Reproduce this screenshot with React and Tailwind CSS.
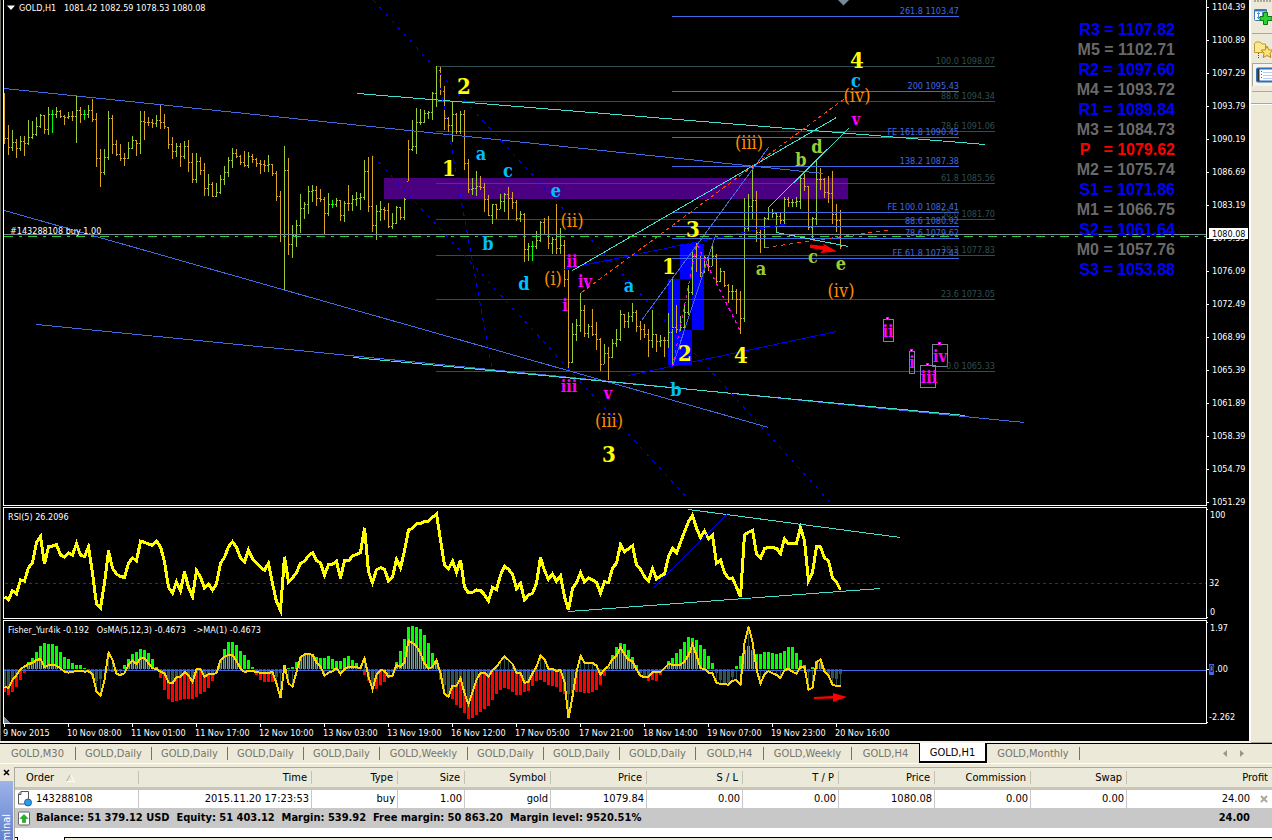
import React from "react";

/* Price bars, one per 4px step: high, low, close (in thirds of a pixel), direction */
const BARS = `279 432 415 o;375 465 442 o;390 453 427 g;418 474 445 o;408 453 424 g;408 468 431 o;360 435 412 g;363 417 403 g;351 408 379 g;342 384 346 g;345 402 388 o;321 405 343 g;330 399 343 l;321 354 333 g;330 354 349 o;345 375 352 o;336 357 348 g;333 363 349 o;285 429 330 g;321 369 343 o;330 360 343 l;315 354 330 g;297 366 357 o;339 501 474 o;447 561 517 o;447 525 471 g;333 480 354 g;345 462 433 o;420 468 463 o;432 483 475 o;459 498 475 o;426 477 445 g;408 447 421 g;420 468 430 o;333 462 364 g;333 420 366 o;351 378 367 o;357 384 370 o;345 381 361 g;312 387 367 o;342 387 380 o;381 447 433 o;411 477 453 o;429 471 439 g;429 501 469 o;423 477 439 g;420 516 487 o;459 549 538 o;459 549 483 g;471 525 511 o;489 588 565 o;522 588 553 g;546 591 589 o;549 591 577 g;525 582 537 g;498 555 516 g;471 531 481 g;444 504 460 g;447 474 470 o;465 495 487 o;453 501 495 o;456 504 469 g;462 489 478 o;474 501 489 o;480 522 493 o;480 516 496 o;465 516 493 g;492 528 520 o;513 603 589 o;573 726 703 o;438 873 511 g;474 765 733 o;675 774 706 g;660 741 676 g;582 699 625 g;606 657 613 g;558 642 574 g;555 606 570 g;558 618 595 o;567 606 598 o;591 702 640 o;579 648 613 g;600 624 613 l;594 621 601 g;600 663 646 o;603 666 610 g;555 633 610 o;585 633 598 g;576 618 595 g;579 630 592 g;480 600 514 g;471 636 619 o;465 696 676 o;615 720 634 g;603 663 628 g;621 660 631 o;609 684 678 o;639 687 670 g;618 672 622 g;621 660 651 o;594 660 598 g;420 543 448 o;360 453 438 g;324 462 367 g;327 375 367 g;330 369 340 g;333 357 337 g;276 360 280 g;198 321 211 g;201 285 274 o;258 390 355 o;351 396 376 o;304 426 343 g;339 402 394 o;333 402 343 g;330 510 490 o;477 579 568 o;534 585 565 g;513 588 559 g;528 570 562 o;549 636 598 o;585 648 645 o;612 672 613 g;612 657 628 o;582 627 604 g;579 636 583 g;561 660 595 o;576 627 607 o;600 663 655 o;633 666 643 g;640 786 748 o;729 783 738 g;723 783 738 l;693 747 721 g;663 726 666 g;654 705 703 o;648 747 730 o;711 762 718 g;612 762 745 o;684 762 736 g;720 861 838 o;810 1113 1088 o;969 1089 1004 g;957 1023 977 g;879 996 932 g;915 1011 1000 o;972 1014 980 g;927 1008 1003 o;966 1050 1018 o;1014 1113 1094 o;1032 1092 1061 g;1041 1140 1072 o;1017 1074 1031 g;987 1041 1018 g;930 1023 943 g;942 984 964 o;936 984 949 g;909 966 936 g;930 996 979 o;963 1020 988 o;972 1014 1002 o;987 1071 1022 o;930 1044 1003 g;1002 1056 1025 o;1005 1041 1021 g;1011 1071 1021 o;939 1044 997 g;831 1101 982 g;915 999 987 o;948 993 982 g;912 990 938 g;855 945 877 g;750 885 770 g;729 816 774 o;768 831 817 o;768 819 772 g;768 813 798 o;738 798 770 g;762 849 845 o;804 846 814 g;813 861 855 o;852 909 874 o;855 900 874 g;867 942 898 o;873 1002 956 o;594 966 686 g;582 696 619 g;496 657 600 g;573 726 697 o;690 759 716 o;651 744 655 g;621 660 636 g;627 654 640 g;639 699 648 g;639 672 661 o;591 672 598 g;591 621 607 o;597 621 607 g;591 621 604 g;525 627 535 g;522 573 559 o;558 690 682 o;651 717 655 g;478 675 538 g;504 570 538 o;534 594 577 o;528 609 580 o;513 672 643 o;612 696 661 o;630 747 739 o`
  .split(";")
  .map((s) => {
    const [h, l, c, d] = s.split(" ");
    return { h: Math.floor(h / 3), l: Math.floor(l / 3), c: Math.floor(c / 3), d };
  });

/* RSI(5), thirds of a pixel below y = 500 */
const RSI = [
  290, 299, 272, 282, 240, 243, 203, 188, 128, 110, 192, 140, 138, 134, 165, 172, 158, 165, 131, 165, 170, 141, 220, 312, 323, 250, 152, 205, 222, 230, 232, 190, 174, 182, 124, 127, 132, 136, 124, 140, 185, 262, 279, 246, 273, 215, 262, 289, 212, 232, 264, 252, 270, 252, 190, 172, 140, 125, 142, 174, 186, 150, 176, 188, 202, 211, 190, 250, 305, 331, 170, 245, 234, 218, 190, 184, 168, 158, 182, 188, 225, 194, 193, 184, 235, 182, 183, 168, 163, 158, 83, 215, 248, 209, 203, 208, 243, 232, 178, 204, 153, 90, 85, 72, 70, 65, 64, 52, 42,
  120, 196, 207, 183, 217, 180, 262, 278, 277, 270, 271, 284, 303, 262, 269, 226, 198, 208, 222, 266, 250, 300, 285, 280, 250, 172, 212, 238, 222, 244, 228, 290, 330, 266, 248, 218, 246, 233, 240, 247, 279, 245, 248, 204, 190, 134, 156, 146, 137, 195, 208, 230, 243, 206, 237, 228, 222, 170, 144, 159, 127, 95, 65, 46, 85, 112, 93, 117, 106, 190, 180, 218, 235, 234, 262, 290, 105, 97, 91, 163, 175, 146, 142, 143, 145, 161, 116, 132, 131, 130, 83, 122, 243, 218, 140, 141, 174, 182, 234, 246, 270,
];

/* Fisher histogram */
const FISHER = [
  576, 585, 577, 561, 540, 519, 487, 474, 456, 438, 429, 432, 432, 438, 456, 471, 477, 489, 495, 495, 504, 510, 530, 543, 537, 514, 511, 516, 516, 514, 495, 477, 462, 456, 447, 450, 459, 477, 501, 534, 570, 597, 606, 603, 600, 597, 597, 597, 591, 582, 576, 564, 543, 516, 480, 447, 426, 426, 435, 453, 465, 480, 501, 525, 540, 546, 546, 546, 531, 519, 512, 504, 501, 487, 474, 465, 465, 468, 471, 474, 474, 468, 477, 483, 483, 474, 468, 480, 489, 501, 525, 543, 570, 567, 555, 546, 534, 516, 487, 453, 417, 381, 378, 381, 387, 405, 429, 459, 480,
  540, 555, 588, 597, 615, 624, 639, 657, 654, 645, 636, 627, 618, 600, 582, 570, 564, 567, 576, 585, 585, 576, 573, 558, 543, 540, 546, 555, 558, 561, 576, 582, 582, 580, 576, 576, 579, 579, 576, 570, 555, 528, 501, 465, 441, 429, 432, 450, 471, 495, 519, 530, 543, 540, 543, 525, 504, 483, 474, 459, 447, 426, 411, 414, 420, 435, 447, 468, 489, 519, 540, 551, 549, 530, 498, 468, 450, 438, 450, 462, 462, 456, 456, 459, 462, 459, 453, 441, 441, 459, 480, 495, 516, 501, 483, 489, 510, 522, 534, 537, 522,
];

/* OsMA line */
const OSMA = [
  560, 564, 540, 525, 507, 500, 492, 489, 480, 477, 502, 496, 494, 497, 505, 515, 518, 515, 514, 512, 515, 514, 522, 575, 588, 540, 458, 480, 522, 525, 520, 494, 482, 492, 474, 474, 490, 505, 507, 515, 520, 547, 550, 532, 530, 516, 525, 546, 508, 508, 530, 523, 522, 520, 480, 470, 465, 465, 483, 505, 516, 513, 512, 517, 518, 518, 519, 516, 550, 594, 494, 550, 560, 516, 472, 463, 462, 464, 487, 500, 527, 518, 514, 504, 522, 507, 501, 500, 502, 504, 475, 530, 568, 525, 510, 512, 530, 527, 495, 500, 488, 422, 430, 438, 460, 490, 506, 500, 480,
  520, 582, 590, 557, 558, 535, 580, 612, 575, 540, 519, 518, 530, 510, 500, 483, 470, 480, 492, 519, 519, 549, 545, 520, 500, 467, 478, 506, 507, 513, 510, 545, 655, 590, 515, 467, 489, 489, 489, 497, 524, 508, 498, 477, 467, 443, 462, 479, 484, 508, 528, 531, 531, 517, 516, 516, 504, 492, 494, 495, 494, 485, 465, 434, 465, 505, 507, 518, 520, 548, 552, 553, 554, 542, 540, 554, 430, 380, 425, 507, 551, 522, 514, 520, 525, 534, 510, 507, 515, 521, 500, 500, 569, 563, 487, 478, 515, 527, 554, 558, 558,
];

const BAR_COLORS = { o: "#daa520", g: "#9acd32", l: "#00ff00" };
const ROYAL = "#4169e1";
const TURQ = "#40e0d0";
const SLATE = "#2f4f4f";

const FIB_GRAY = [
  [66, "100.0 1098.07"],
  [101, "88.6 1094.34"],
  [131, "78.6  1091.06"],
  [183, "61.8  1085.56"],
  [219, "50.0  1081.70"],
  [255, "38.2  1077.83"],
  [299, "23.6  1073.05"],
  [371, "0.0   1065.33"],
];

const FIB_BLUE = [
  [16, "261.8 1103.47"],
  [91, "200 1095.43"],
  [137, "FE 161.8 1090.45"],
  [166, "138.2 1087.38"],
  [212, "FE 100.0 1082.41"],
  [226, "88.6 1080.92"],
  [238, "78.6 1079.62"],
  [258, "FE 61.8 1077.43"],
];

/* x1, y1, x2, y2, colour, dash */
const TRENDS = [
  [4, 88, 823, 173, ROYAL],
  [4, 210, 768, 427, ROYAL],
  [36, 324, 1024, 422, ROYAL],
  [357, 93, 985, 144, TURQ],
  [353, 357, 965, 415, TURQ],
  [373, 0, 829, 501, "#0000ff", "3 6"],
  [372, 155, 689, 500, "#0000ff", "3 6"],
  [437, 70, 492, 371, "#0000ff", "4 5"],
  [562, 269, 787, 223, "#0000ff", "12 1"],
  [628, 375, 836, 331, "#0000ff", "12 1"],
  [641, 320, 768, 147, ROYAL],
  [672, 366, 715, 235, ROYAL],
  [572, 270, 836, 117, TURQ],
  [581, 292, 847, 96, "#ff4500", "4 3"],
  [765, 247, 892, 229, "#ff4500", "4 4"],
  [768, 207, 848, 128, TURQ],
  [776, 232, 848, 246, TURQ],
  [672, 366, 696, 244, "#ff00ff", "3 4"],
  [697, 245, 740, 331, "#ff00ff", "3 4"],
];

const YELLOW = "#ffff00";
const CYAN = "#00bfff";
const ORANGE = "#ff8c00";
const MAGENTA = "#ff00ff";
const LEAF = "#9acd32";

/* x centre, baseline, text, colour */
const WAVES = [
  [464, 94, "2", YELLOW],
  [449, 176, "1", YELLOW],
  [481, 160, "a", CYAN],
  [508, 177, "c", CYAN],
  [556, 197, "e", CYAN],
  [572, 227, "(ii)", ORANGE],
  [488, 250, "b", CYAN],
  [693, 237, "3", YELLOW],
  [572, 267, "ii", MAGENTA],
  [524, 290, "d", CYAN],
  [553, 285, "(i)", ORANGE],
  [585, 287, "iv", MAGENTA],
  [565, 311, "i", MAGENTA],
  [629, 292, "a", CYAN],
  [669, 274, "1", YELLOW],
  [685, 361, "2", YELLOW],
  [569, 392, "iii", MAGENTA],
  [608, 399, "v", MAGENTA],
  [676, 396, "b", CYAN],
  [609, 427, "(iii)", ORANGE],
  [609, 462, "3", YELLOW],
  [857, 68, "4", YELLOW],
  [856, 87, "c", CYAN],
  [857, 102, "(iv)", ORANGE],
  [856, 125, "v", MAGENTA],
  [749, 149, "(iii)", ORANGE],
  [817, 153, "d", LEAF],
  [801, 166, "b", LEAF],
  [761, 275, "a", LEAF],
  [813, 263, "c", LEAF],
  [841, 270, "e", LEAF],
  [841, 297, "(iv)", ORANGE],
  [741, 363, "4", YELLOW],
  [888, 337, "ii", MAGENTA],
  [912, 368, "i", MAGENTA],
  [929, 383, "iii", MAGENTA],
  [940, 362, "iv", MAGENTA],
];

const WAVE_STYLES = { [YELLOW]: [22, 700], [CYAN]: [18, 700], [ORANGE]: [18, 400], [MAGENTA]: [16, 700], [LEAF]: [18, 700] };

/* box x, y, width, handle x */
const SELECTED = [
  [883, 319, 10, 887],
  [909, 351, 5, 911],
  [920, 365, 15, 927],
  [932, 344, 15, 939],
];

const PIVOTS = [
  ["R3 = 1107.82", "text-[#0000ff]"],
  ["M5 = 1102.71", "text-[#696969]"],
  ["R2 = 1097.60", "text-[#0000ff]"],
  ["M4 = 1093.72", "text-[#696969]"],
  ["R1 = 1089.84", "text-[#0000ff]"],
  ["M3 = 1084.73", "text-[#696969]"],
  ["P   = 1079.62", "text-[#ff0000]"],
  ["M2 = 1075.74", "text-[#696969]"],
  ["S1 = 1071.86", "text-[#0000ff]"],
  ["M1 = 1066.75", "text-[#696969]"],
  ["S2 = 1061.64", "text-[#0000ff]"],
  ["M0 = 1057.76", "text-[#696969]"],
  ["S3 = 1053.88", "text-[#0000ff]"],
];

const PRICES = ["1104.39", "1100.89", "1097.29", "1093.79", "1090.19", "1086.69", "1083.19", "1079.59", "1076.09", "1072.49", "1068.99", "1065.39", "1061.89", "1058.39", "1054.79", "1051.29"];

const TIMES = ["9 Nov 2015", "10 Nov 08:00", "11 Nov 01:00", "11 Nov 17:00", "12 Nov 10:00", "13 Nov 03:00", "13 Nov 19:00", "16 Nov 12:00", "17 Nov 05:00", "17 Nov 21:00", "18 Nov 14:00", "19 Nov 07:00", "19 Nov 23:00", "20 Nov 16:00"];

const TABS = [
  ["GOLD,M30", "w-[76px]"],
  ["GOLD,Daily", "w-[76px]"],
  ["GOLD,Daily", "w-[76px]"],
  ["GOLD,Daily", "w-[76px]"],
  ["GOLD,Daily", "w-[76px]"],
  ["GOLD,Weekly", "w-[88px]"],
  ["GOLD,Daily", "w-[76px]"],
  ["GOLD,Daily", "w-[76px]"],
  ["GOLD,Daily", "w-[76px]"],
  ["GOLD,H4", "w-[68px]"],
  ["GOLD,Weekly", "w-[88px]"],
  ["GOLD,H4", "w-[67px]"],
  ["GOLD,H1", "w-[68px]"],
  ["GOLD,Monthly", "w-[93px]"],
];

const COLUMNS = [
  ["Order", "w-[124px]", "143288108"],
  ["Time", "w-[173px]", "2015.11.20 17:23:53"],
  ["Type", "w-[86px]", "buy"],
  ["Size", "w-[67px]", "1.00"],
  ["Symbol", "w-[86px]", "gold"],
  ["Price", "w-[96px]", "1079.84"],
  ["S / L", "w-[96px]", "0.00"],
  ["T / P", "w-[96px]", "0.00"],
  ["Price", "w-[96px]", "1080.08"],
  ["Commission", "w-[96px]", "0.00"],
  ["Swap", "w-[96px]", "0.00"],
  ["Profit", "", "24.00"],
];

const barX = (i) => 4 + i * 4;
const points = (values) => values.map((v, i) => `${barX(i) + 0.5},${(500 + v / 3).toFixed(1)}`).join(" ");

function Segment({ line }) {
  const [x1, y1, x2, y2, stroke, dash] = line;
  return <line x1={x1 + 0.5} y1={y1 + 0.5} x2={x2 + 0.5} y2={y2 + 0.5} stroke={stroke} strokeDasharray={dash} />;
}

function PricePlot() {
  return (
    <svg className="block h-[505px] w-full" shapeRendering="crispEdges">
      <g transform="translate(-4 0)">
        <rect x="384" y="178" width="464" height="21" fill="#4b0082" />
        <path d="M680 244h24v86h-12v35h-24v-86h12zM680 279v51h12v-51z" fill="#0000ff" fillRule="evenodd" />
        {FIB_GRAY.map(([y]) => (
          <rect key={y} x="436" y={y} width="559" height="1" fill={SLATE} />
        ))}
        {BARS.map((b, i) => {
          const x = barX(i);
          const open = i ? BARS[i - 1].c : b.h + 12;
          const o = open < b.h ? b.h : open > b.l ? b.l : open;
          return <path key={i} d={`M${x} ${b.h}h1v${b.l - b.h}h-1zM${x - 1} ${o}h1v1h-1zM${x + 1} ${b.c}h1v1h-1z`} fill={BAR_COLORS[b.d]} />;
        })}
        {FIB_BLUE.map(([y]) => (
          <rect key={y} x="672" y={y} width="287" height="1" fill={ROYAL} />
        ))}
        {TRENDS.map((t, i) => (
          <Segment key={i} line={t} />
        ))}
        <line x1="4" y1="234.5" x2="4000" y2="234.5" stroke="#778899" />
        <line x1="4" y1="236.5" x2="4000" y2="236.5" stroke="#32cd32" strokeDasharray="9 6 3 6" />
        <g shapeRendering="auto">
          <path d="M810 244.500l14 1.500-1-2.500 14 8-17 1.500 3-3-13-2z" fill="#ff0000" />
          <path d="M838 0h11l-5.500 5.500z" fill="#778899" />
          <path d="M7 5.500h8l-4 4.500z" fill="#ffffff" />
        </g>
        {SELECTED.map(([x, y, w, hx]) => (
          <g key={x}>
            <rect x={x + 0.5} y={y + 0.5} width={w} height="22" fill="none" stroke="#778899" />
            <rect x={hx - 1} y={y - 2} width="3" height="3" fill={MAGENTA} />
            <rect x={hx} y={y - 1} width="1" height="1" fill="#ffffff" />
          </g>
        ))}
        <g className="text-[9px] whitespace-pre" textAnchor="end">
          {FIB_GRAY.map(([y, label]) => (
            <text key={y} x="995" y={y - 2} fill={SLATE}>{label}</text>
          ))}
          {FIB_BLUE.map(([y, label]) => (
            <text key={y} x="959" y={y - 2} fill={ROYAL}>{label}</text>
          ))}
        </g>
        <g className="text-[9px] whitespace-pre" fill="#ffffff">
          <text x="19" y="11" className="whitespace-pre">{"GOLD,H1   1081.42 1082.59 1078.53 1080.08"}</text>
          <text x="10" y="234">#143288108 buy 1.00</text>
        </g>
        <g className="font-['DejaVu_Serif_Condensed','DejaVu_Serif',serif]" textAnchor="middle">
          {WAVES.map(([x, y, label, color], i) => (
            <text key={i} x={x} y={y} fill={color} fontSize={WAVE_STYLES[color][0]} fontWeight={WAVE_STYLES[color][1]}>
              {label}
            </text>
          ))}
        </g>
      </g>
    </svg>
  );
}

function RsiPlot() {
  return (
    <svg className="block h-[110px] w-full" shapeRendering="crispEdges">
      <g transform="translate(-4 -508)">
        <line x1="5" y1="583.5" x2="4000" y2="583.5" stroke="#800080" strokeDasharray="3 3" />
        <polyline points={points(RSI)} fill="none" stroke="#ffff00" strokeWidth="3" />
        <Segment line={[688, 509, 900, 537, TURQ]} />
        <Segment line={[568, 611, 880, 588, TURQ]} />
        <Segment line={[652, 588, 727, 513, "#0000ff"]} />
        <text x="8" y="520" fill="#ffffff" className="text-[9px]">RSI(5) 26.2096</text>
      </g>
    </svg>
  );
}

function FisherPlot() {
  return (
    <svg className="block h-[102px] w-full" shapeRendering="crispEdges">
      <g transform="translate(-4 -621)">
        {FISHER.map((v, i) => {
          const y = Math.round(500 + v / 3);
          const x = barX(i) - 1;
          return v < 508 ? (
            <rect key={i} x={x} y={y} width="3" height={669 - y} fill="#00ff00" />
          ) : (
            <rect key={i} x={x} y="669" width="3" height={Math.max(1, y - 669)} fill="#ff0000" />
          );
        })}
        {OSMA.map((v, i) => {
          const y = Math.round(500 + v / 3);
          return <rect key={i} x={barX(i)} y={Math.min(y, 670)} width="1" height={Math.abs(y - 670)} fill={SLATE} />;
        })}
        <line x1="4" y1="670.5" x2="4000" y2="670.5" stroke={ROYAL} />
        <polyline points={points(OSMA)} fill="none" stroke="#ffd700" strokeWidth="2" />
        <path d="M814 697l19-1v-3l14 4-14 5v-3.500l-19 .5z" fill="#ff0000" shapeRendering="auto" />
        <path d="M4 717l6 6h-6z" fill="#778899" />
        <text x="8" y="633" fill="#ffffff" className="text-[9px] whitespace-pre">{"Fisher_Yur4ik -0.192   OsMA(5,12,3) -0.4673   ->MA(1) -0.4673"}</text>
      </g>
    </svg>
  );
}

function PriceAxis() {
  return (
    <svg className="block h-[506px] w-[42px]" fill="#ffffff">
      <g className="text-[9px]">
        {PRICES.map((p, i) => (
          <g key={p}>
            <rect x="0" y={7 + i * 33} width="2" height="1" />
            <text x="5" y={10 + i * 33}>{p}</text>
          </g>
        ))}
        <rect x="2" y="228" width="39" height="11" />
        <text x="5" y="237" fill="#000000">1080.08</text>
      </g>
    </svg>
  );
}

function RsiAxis() {
  return (
    <svg className="block h-[112px] w-[42px] text-[9px]" fill="#ffffff">
      <rect x="0" y="2" width="1" height="1" />
      <text x="3" y="11">100</text>
      <text x="2" y="79">32</text>
      <text x="3" y="108">0</text>
      <rect x="0" y="110" width="1" height="1" />
    </svg>
  );
}

function FisherAxis() {
  return (
    <svg className="block h-[104px] w-[42px] text-[9px]" fill="#ffffff">
      <rect x="0" y="2" width="1" height="1" />
      <text x="3" y="11">1.97</text>
      <rect x="0" y="49" width="2" height="1" />
      <rect x="2" y="44" width="5" height="11" fill={ROYAL} />
      <text x="2" y="52" fill="#000000">0</text>
      <text x="8" y="52">.00</text>
      <text x="2" y="100">-2.262</text>
      <rect x="0" y="102" width="1" height="1" />
    </svg>
  );
}

function ChartWindow() {
  return (
    <section className="flex min-w-0 flex-1 flex-col gap-px border-r-2 border-white bg-black pl-[2px] font-['DejaVu_Sans_Condensed','DejaVu_Sans',sans-serif]">
      <div className="flex">
        <div className="relative min-w-0 flex-1 border-r border-b border-l border-white">
          <PricePlot />
          <ul className="absolute top-[20px] right-[31px] text-right font-['Liberation_Sans',sans-serif] text-base leading-5 font-bold whitespace-pre">
            {PIVOTS.map(([label, color]) => (
              <li key={label} className={color}>{label}</li>
            ))}
          </ul>
        </div>
        <PriceAxis />
      </div>
      <div className="flex">
        <div className="min-w-0 flex-1 border border-white">
          <RsiPlot />
        </div>
        <RsiAxis />
      </div>
      <div>
        <div className="flex">
          <div className="min-w-0 flex-1 border border-white">
            <FisherPlot />
          </div>
          <FisherAxis />
        </div>
        <svg className="block h-[17px] w-full text-[9px]" fill="#ffffff">
          {TIMES.map((t, i) => (
            <g key={t}>
              <rect x={1 + i * 64} y="0" width="1" height="3" />
              <text x={i * 64} y="12">{t}</text>
            </g>
          ))}
        </svg>
      </div>
    </section>
  );
}

function SideToolbar() {
  return (
    <aside className="flex w-[21px] flex-col overflow-hidden border-b border-[#aca899]" aria-label="Toolbar">
      <svg className="block h-[8px] w-[21px] shrink-0" fill="#aca899">
        {[3, 6, 9, 12, 15, 18].map((x) => (
          <rect key={x} x={x} y="0" width="2" height="2" />
        ))}
      </svg>
      <button type="button" aria-label="New order" className="flex h-[25px] w-[21px] items-start">
        <svg width="21" height="18" viewBox="0 0 21 18">
          <rect x="3.500" y="1.500" width="12" height="11" rx="1" fill="#fff" stroke="#3a78b8" />
          <path d="M3 2.500h13" stroke="#3a78b8" strokeWidth="2" />
          <path d="M7.500 4v7M6 5.500h3M6 9.500h3M11.500 4v4" stroke="#5b8fd0" />
          <path d="M12.500 4.500h4v4h4.500v4h-4.500v4h-4v-4H9v-4h3.500z" fill="#2fd035" stroke="#067a12" />
        </svg>
      </button>
      <div className="ml-[1px] h-px shrink-0 bg-[#aca899]" />
      <button type="button" aria-label="Navigator" className="mt-[7px] flex h-[21px] w-[21px] items-start">
        <svg width="21" height="19" viewBox="0 0 21 19">
          <path d="M3.500 11.500v-9l1.500-1.500h4l2 2h3.500v8.500z" fill="#fbe893" stroke="#c39a2c" />
          <path d="M7.500 12v5" stroke="#444" strokeDasharray="1 1" />
          <path d="M16 5l1.800 3.800 4.200.4-3 3 .8 4.300-3.800-2-3.800 2 .8-4.300-3-3 4.200-.4z" fill="#fde27a" stroke="#b88a1c" />
        </svg>
      </button>
      <button type="button" aria-label="Terminal" className="mt-[1px] ml-[1px] flex h-[23px] w-[20px] items-start border-t border-l border-[#aca899] bg-[#f6f4ec]">
        <svg width="19" height="21" viewBox="0 0 19 21">
          <rect x="4" y="4.500" width="18" height="13" rx="1" fill="#fff" stroke="#2f6fb5" strokeWidth="2" />
          <path d="M5.500 5v12" stroke="#333" strokeWidth="2" />
          <path d="M10 8.500h9M10 11.500h9M10 14.500h9" stroke="#b9cdf5" />
          <path d="M8.500 7v8" stroke="#e02020" strokeDasharray="1 2" />
        </svg>
      </button>
      <div className="mt-[5px] ml-[1px] h-px shrink-0 bg-[#aca899]" />
      <div className="mt-[11px] h-[2px] shrink-0 border-t border-[#aca899] bg-white" />
    </aside>
  );
}

function ChartTabs() {
  return (
    <nav className="flex h-[20px] shrink-0 items-start border-t border-black text-[11px] leading-[17px] text-[#777468]">
      {TABS.map(([label, width], i) =>
        label === "GOLD,H1" ? (
          <button key={i} type="button" aria-current="page" className={`${width} -mt-px h-[20px] shrink-0 border-r-2 border-b-2 border-l border-black bg-white text-black`}>
            {label}
          </button>
        ) : (
          <button key={i} type="button" className={`${width} flex h-[18px] shrink-0 items-center justify-center`}>
            <span className="flex-1 text-center">{label}</span>
            {TABS[i + 1]?.[0] !== "GOLD,H1" && <span className="h-[13px] w-px bg-[#777468]" />}
          </button>
        )
      )}
      <span className="flex-1" />
      <span className="mr-[27px] flex h-[18px] items-center gap-[11px]">
        <button type="button" aria-label="Scroll left">
          <svg width="6" height="7" className="block"><path d="M5 0v7L1 3.500z" fill="#9a978a" /></svg>
        </button>
        <button type="button" aria-label="Scroll right">
          <svg width="6" height="7" className="block"><path d="M1 0v7l4-3.500z" fill="#9a978a" /></svg>
        </button>
      </span>
    </nav>
  );
}

function Terminal() {
  return (
    <section className="flex min-h-0 flex-1 overflow-hidden">
      <div className="flex w-[14px] flex-col">
        <button type="button" aria-label="Close" className="flex h-[14px] shrink-0 items-start justify-center pt-[2px] pr-[2px]">
          <svg width="7" height="7"><path d="M1 1l5 5M6 1L1 6" stroke="#000" strokeWidth="1.500" /></svg>
        </button>
        <div className="min-h-0 w-[13px] flex-1 overflow-hidden bg-linear-to-b from-[#9db4e8] to-[#6380d0]">
          <div className="flex justify-center pt-[33px] text-[11px] leading-[13px] text-white [writing-mode:vertical-rl]">
            <span className="rotate-180">Terminal</span>
          </div>
        </div>
      </div>
      <div className="min-w-0 flex-1 border-t border-l border-[#aca899] bg-white">
        <table className="w-full table-fixed border-separate border-spacing-0 text-[11px] leading-[14px] whitespace-pre text-black">
          <colgroup>
            {COLUMNS.map(([name, width], i) => (
              <col key={name + i} className={width} />
            ))}
          </colgroup>
          <thead>
            <tr className="bg-[#ebe9d9]">
              {COLUMNS.map(([name], i) => (
                <th key={name + i} scope="col" className="h-[22px] border-b-3 border-[#c9c6b8] p-0 font-normal">
                  <div className={`flex h-[13px] items-center ${i === 11 ? "justify-end pr-1" : i ? "justify-end border-r border-[#c5c2b0] pr-1" : "gap-3 border-r border-[#c5c2b0] pl-[11px]"}`}>
                    {name}
                    {i === 0 && <svg width="9" height="8"><path d="M.5 7.500L4.500.5" stroke="#aca899" fill="none" /><path d="M4.500.5l4 7h-8" stroke="#fff" fill="none" /></svg>}
                  </div>
                </th>
              ))}
            </tr>
          </thead>
          <tbody>
            <tr>
              {COLUMNS.map(([name, , value], i) => (
                <td key={name + i} className={i === 11 ? "h-[18px] p-0" : i ? "h-[18px] border-r border-[#c8c8c8] p-0 pr-[2px] text-right" : "h-[18px] border-r border-[#c8c8c8] p-0"}>
                  {i === 0 ? (
                    <span className="flex items-center gap-[4px] pl-[3px]">
                      <svg width="14" height="16" viewBox="0 0 14 16" className="shrink-0">
                        <path d="M.5 3L3 .5h7.500v12.500H.5z" fill="#fff" stroke="#555" />
                        <path d="M.5 3.500H3V.5" fill="none" stroke="#555" />
                        <circle cx="10" cy="11.500" r="3.500" fill="#2b9be8" stroke="#1766a8" />
                      </svg>
                      {value}
                    </span>
                  ) : i === 11 ? (
                    <span className="flex items-center justify-end gap-[10px] pr-1">
                      {value}
                      <button type="button" aria-label="Close order">
                        <svg width="8" height="8" className="block"><path d="M1 1l6 6M7 1L1 7" stroke="#aca899" strokeWidth="2" /></svg>
                      </button>
                    </span>
                  ) : (
                    value
                  )}
                </td>
              ))}
            </tr>
            <tr className="bg-[#c8c8c8] font-bold">
              <td colSpan={11} className="h-[20px] p-0">
                <span className="flex items-center gap-[6px] pl-[3px]">
                  <svg width="12" height="15" viewBox="0 0 12 15" className="shrink-0">
                    <rect x=".5" y="1" width="11" height="13" rx="1" fill="#fff" stroke="#666" />
                    <path d="M6 3.500l4 4H7.500v4h-3v-4H2z" fill="#1fb61f" stroke="#0a7a0a" strokeWidth=".5" />
                  </svg>
                  {"Balance: 51 379.12 USD  Equity: 51 403.12  Margin: 539.92  Free margin: 50 863.20  Margin level: 9520.51%"}
                </span>
              </td>
              <td className="p-0 pr-[22px] text-right">24.00</td>
            </tr>
          </tbody>
        </table>
        <div className="mt-[9px] flex h-[3px]">
          <div className="w-[3px] border-t border-r border-black" />
          <div className="w-[46px]" />
          <div className="flex-1 border-t border-l border-black bg-[#ece9d8]" />
        </div>
      </div>
    </section>
  );
}

export default function App() {
  return (
    <main className="flex h-screen flex-col overflow-hidden bg-[#ece9d8] font-['DejaVu_Sans_Condensed','DejaVu_Sans',sans-serif]">
      <div className="flex shrink-0">
        <div className="flex min-w-0 flex-1 border-b-2 border-[#f4f2e8]">
          <div className="w-px bg-[#6b6960]" />
          <ChartWindow />
        </div>
        <SideToolbar />
      </div>
      <ChartTabs />
      <div className="mb-[3px] h-px shrink-0 bg-white" />
      <Terminal />
    </main>
  );
}
